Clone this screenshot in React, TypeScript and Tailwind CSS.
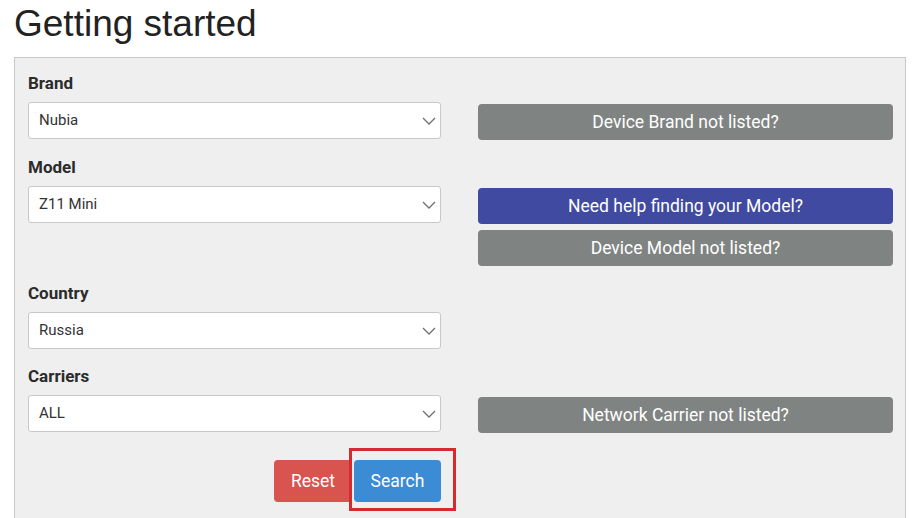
import React from "react";

const roboto = { fontFamily: "Roboto, 'Noto Sans', Arial, sans-serif" };

function Chevron() {
  return (
    <svg width="14" height="8" viewBox="0 0 14 8" fill="none" className="shrink-0">
      <path d="M1 1l6 6 6-6" stroke="#6f6f6f" strokeWidth="1.3" />
    </svg>
  );
}

function Field({ label, value }: { label: string; value: string }) {
  return (
    <div className="flex flex-col">
      <div className="text-[17px] leading-[20px] font-bold text-[#2b2b2b] mb-[9px]">{label}</div>
      <div className="h-[37px] bg-white border border-[#c8c8c8] rounded-[3px] flex items-center justify-between pl-[10px] pr-[4px]">
        <span className="text-[15px] text-[#333]">{value}</span>
        <Chevron />
      </div>
    </div>
  );
}

function SideButton({ text, tone }: { text: string; tone: "grey" | "indigo" }) {
  return (
    <button
      className={
        "h-[36px] w-full rounded-[4px] text-white text-[17.5px] flex items-center justify-center " +
        (tone === "grey" ? "bg-[#7f8482]" : "bg-[#3f4aa0]")
      }
    >
      {text}
    </button>
  );
}

export default function App() {
  return (
    <div className="w-[915px] h-[518px] overflow-hidden bg-white px-[14px]">
      <h1
        className="text-[37px] leading-[41px] text-[#222] pt-[3px]"
        style={{ fontFamily: "'Liberation Sans', Arial, sans-serif" }}
      >
        Getting started
      </h1>
      <div
        className="mt-[13px] w-[892px] h-[520px] bg-[#efefef] border border-[#c8c8c8] px-[13px] pt-[15px]"
        style={roboto}
      >
        <div className="flex flex-col gap-[17px]">
          <div className="grid grid-cols-[413px_415px] gap-x-[37px]">
            <Field label="Brand" value="Nubia" />
            <div className="pt-[31px]">
              <SideButton text="Device Brand not listed?" tone="grey" />
            </div>
          </div>
          <div className="grid grid-cols-[413px_415px] gap-x-[37px]">
            <Field label="Model" value="Z11 Mini" />
            <div className="pt-[31px] flex flex-col gap-[6px]">
              <SideButton text="Need help finding your Model?" tone="indigo" />
              <SideButton text="Device Model not listed?" tone="grey" />
            </div>
          </div>
          <div className="grid grid-cols-[413px_415px] gap-x-[37px]">
            <Field label="Country" value="Russia" />
            <div />
          </div>
          <div className="grid grid-cols-[413px_415px] gap-x-[37px]">
            <Field label="Carriers" value="ALL" />
            <div className="pt-[31px]">
              <SideButton text="Network Carrier not listed?" tone="grey" />
            </div>
          </div>
        </div>
        <div className="w-[413px] flex justify-end gap-[2px] mt-[27px]">
          <button className="h-[42px] w-[78px] rounded-[4px] bg-[#d9534f] text-white text-[17.5px]">
            Reset
          </button>
          <div className="relative">
            <button className="h-[42px] w-[87px] rounded-[4px] bg-[#3b8bd5] text-white text-[17.5px]">
              Search
            </button>
            <div className="absolute left-[-5px] top-[-12px] w-[107px] h-[63px] border-[3px] border-[#d42a30]" />
          </div>
        </div>
      </div>
    </div>
  );
}
